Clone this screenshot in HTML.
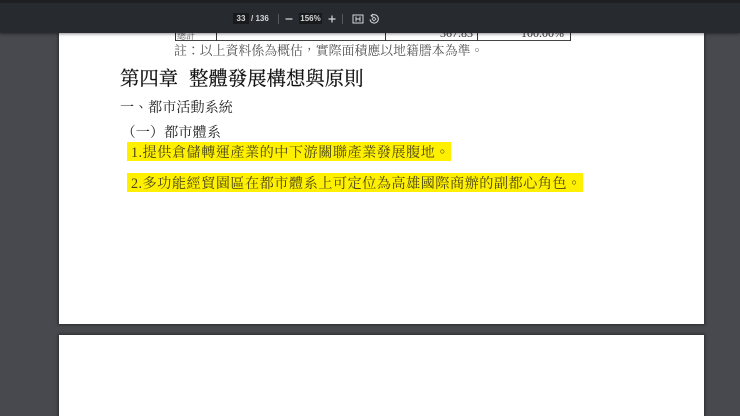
<!DOCTYPE html>
<html lang="zh-Hant">
<head>
<meta charset="utf-8">
<title>PDF</title>
<style>
html,body{margin:0;padding:0;width:740px;height:416px;overflow:hidden;background:#47494e}
body{position:relative;font-family:"Liberation Serif","Noto Serif CJK TC","Noto Serif CJK SC",serif}
.abs{position:absolute;white-space:nowrap}
.page{position:absolute;left:59px;width:645px;background:#fff;box-shadow:0 0 3px 1px rgba(0,0,0,.4)}
#content{position:absolute;left:0;top:0;width:740px;height:416px;filter:blur(.35px)}
#toolbar{position:absolute;left:0;top:0;width:740px;height:33px;background:#272a2f;box-shadow:0 1px 3px rgba(0,0,0,.45);z-index:5;filter:blur(.3px)}
#strip{position:absolute;left:0;top:0;width:740px;height:3px;background:#1e1f22}
.tb{position:absolute;color:#d6d8da;font:bold 8px "Liberation Sans",sans-serif;white-space:nowrap}
.box{position:absolute;background:#191a1c;top:13px;height:11px;text-align:center;color:#d6d8da;font:bold 8px/12px "Liberation Sans",sans-serif}
.sep{position:absolute;top:14px;width:1px;height:10px;background:#55585c}
.v{position:absolute;top:33px;height:8px;width:1px;background:#333}
.t{color:#1a1a1a;line-height:20px}
.y{position:absolute;left:127px;background:#fff000;color:#4a4618;font-size:14.2px;letter-spacing:.45px;line-height:22px;white-space:nowrap;padding-left:4px;box-sizing:border-box;overflow:hidden}
</style>
</head>
<body>
<div class="page" style="top:33px;height:291px"></div>
<div class="page" style="top:335px;height:90px"></div>

<div id="content">
<!-- table remnant -->
<div class="abs" style="left:175px;top:40px;width:396px;height:1px;background:#444"></div>
<div class="v" style="left:175px"></div>
<div class="v" style="left:216px"></div>
<div class="v" style="left:385px"></div>
<div class="v" style="left:477px"></div>
<div class="v" style="left:570px"></div>
<div class="abs" style="left:177px;top:31px;font-size:9px;line-height:11px;color:#555">總計</div>
<div class="abs" style="left:440px;top:27px;font-size:12px;line-height:12px;color:#333">367.83</div>
<div class="abs" style="left:521px;top:27px;font-size:12px;line-height:12px;color:#333">100.00%</div>

<!-- text -->
<div class="abs" style="left:174px;top:41px;font-size:12.9px;line-height:20px;color:#555">註&#xFF1A;以上資料係為概估&#xFF0C;實際面積應以地籍謄本為準。</div>
<div class="abs t" style="left:120px;top:68px;font-size:19.4px;line-height:24px;color:#111;-webkit-text-stroke:.2px #111">第四章</div>
<div class="abs t" style="left:189px;top:68px;font-size:19.4px;line-height:24px;color:#111;-webkit-text-stroke:.2px #111">整體發展構想與原則</div>
<div class="abs t" style="left:120px;top:98px;font-size:14.1px;color:#222">一、都市活動系統</div>
<div class="abs t" style="left:121.5px;top:123px;font-size:14.2px;color:#222">&#xFF08;一&#xFF09;都市體系</div>

<div class="y" style="top:142px;width:324px;height:19px">1.提供倉儲轉運產業的中下游關聯產業發展腹地。</div>
<div class="y" style="top:173px;width:456px;height:19px">2.多功能經貿園區在都市體系上可定位為高雄國際商辦的副都心角色。</div>
</div>

<!-- toolbar -->
<div id="toolbar">
  <div id="strip"></div>
  <div class="box" style="left:233px;width:16px">33</div>
  <div class="tb" style="left:251px;top:14px">/ 136</div>
  <div class="sep" style="left:278px"></div>
  <svg style="position:absolute;left:284px;top:14px" width="10" height="10" viewBox="0 0 10 10"><path d="M1.5 5H8.5" stroke="#d6d8da" stroke-width="1.2"/></svg>
  <div class="box" style="left:299px;width:23px">156%</div>
  <svg style="position:absolute;left:327px;top:14px" width="10" height="10" viewBox="0 0 10 10"><path d="M1.5 5H8.5M5 1.5V8.5" stroke="#d6d8da" stroke-width="1.2"/></svg>
  <div class="sep" style="left:342px"></div>
  <svg style="position:absolute;left:352px;top:13px" width="12" height="12" viewBox="0 0 12 12"><rect x="1" y="2" width="10" height="8" fill="none" stroke="#d6d8da" stroke-width="1"/><path d="M4 3.5V8.5M8 3.5V8.5M4 6H8" fill="none" stroke="#d6d8da" stroke-width="1"/></svg>
  <svg style="position:absolute;left:368px;top:13px" width="12" height="12" viewBox="0 0 12 12"><path d="M3.5 2.6A4.2 4.2 0 1 1 2 6.5" fill="none" stroke="#d6d8da" stroke-width="1"/><path d="M5 1L3 2.7L5 4.2" fill="none" stroke="#d6d8da" stroke-width=".9"/><rect x="4.6" y="4.6" width="2.8" height="2.8" transform="rotate(45 6 6)" fill="none" stroke="#d6d8da" stroke-width=".8"/></svg>
</div>
</body>
</html>
